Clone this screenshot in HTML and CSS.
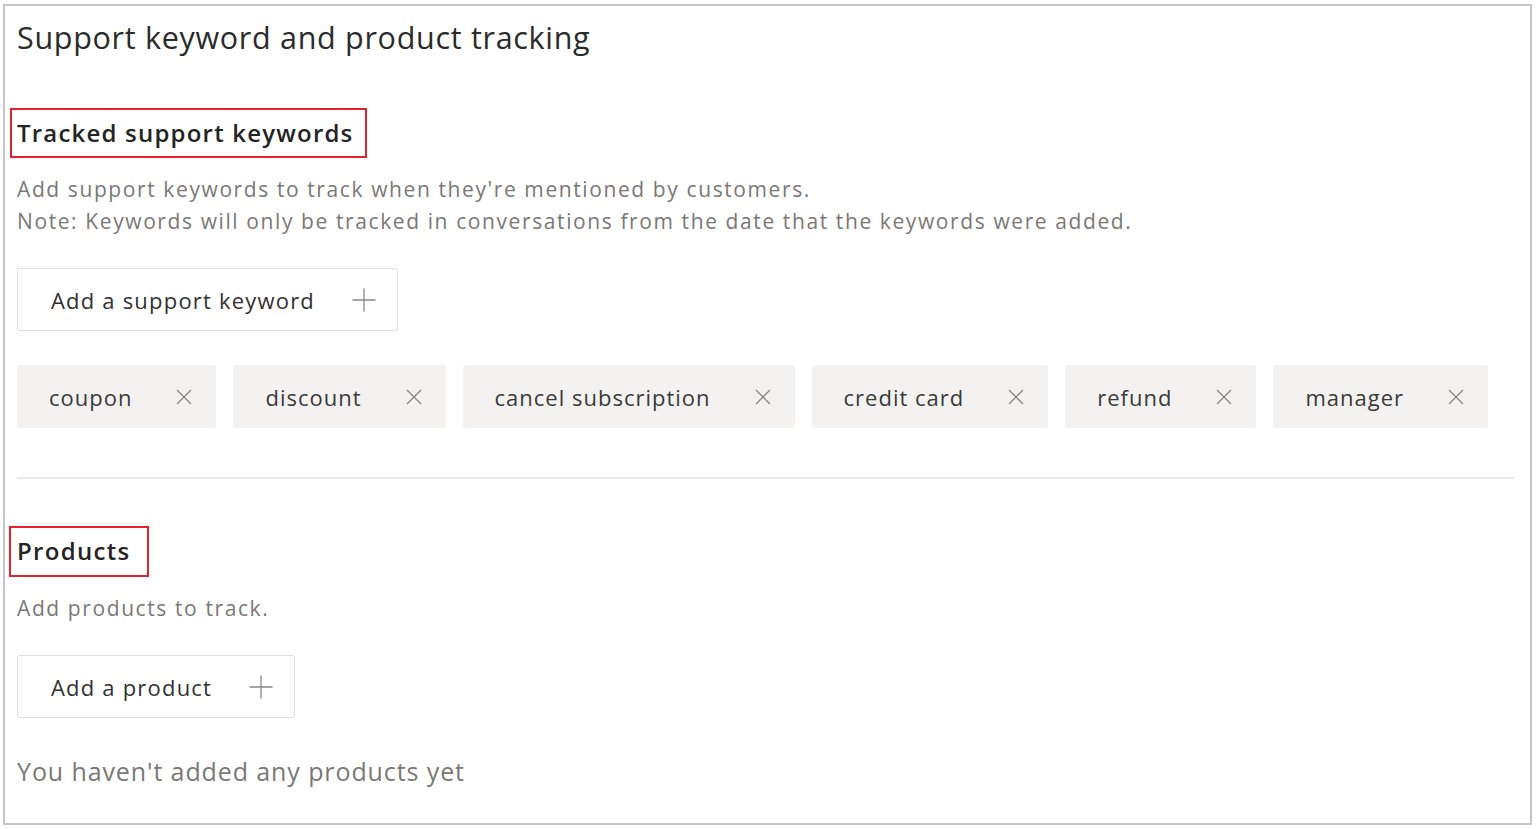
FILE: index.html
```html
<!DOCTYPE html>
<html>
<head>
<meta charset="utf-8">
<link rel="stylesheet" href="styles.css">
</head>
<body>
<div class="frame">
  <h1 class="title">Support keyword and product tracking</h1>

  <section class="section">
    <div class="annot annot-1"><h2 class="heading">Tracked support keywords</h2></div>
    <p class="desc">Add support keywords to track when they're mentioned by customers.<br>Note: Keywords will only be tracked in conversations from the date that the keywords were added.</p>
    <button class="add-btn add-kw"><span>Add a support keyword</span>
      <svg class="plus" viewBox="0 0 24 24" width="24" height="24"><path d="M12 0.5V23.5M0.5 12H23.5" stroke="#8a8886" stroke-width="1.3" fill="none"/></svg>
    </button>
    <div class="tags">
      <div class="tag"><span>coupon</span><svg class="x" viewBox="0 0 16 16" width="16" height="16"><path d="M1 1L15 15M15 1L1 15" stroke="#8a8886" stroke-width="1.4" fill="none"/></svg></div>
      <div class="tag"><span>discount</span><svg class="x" viewBox="0 0 16 16" width="16" height="16"><path d="M1 1L15 15M15 1L1 15" stroke="#8a8886" stroke-width="1.4" fill="none"/></svg></div>
      <div class="tag"><span>cancel subscription</span><svg class="x" viewBox="0 0 16 16" width="16" height="16"><path d="M1 1L15 15M15 1L1 15" stroke="#8a8886" stroke-width="1.4" fill="none"/></svg></div>
      <div class="tag"><span>credit card</span><svg class="x" viewBox="0 0 16 16" width="16" height="16"><path d="M1 1L15 15M15 1L1 15" stroke="#8a8886" stroke-width="1.4" fill="none"/></svg></div>
      <div class="tag"><span>refund</span><svg class="x" viewBox="0 0 16 16" width="16" height="16"><path d="M1 1L15 15M15 1L1 15" stroke="#8a8886" stroke-width="1.4" fill="none"/></svg></div>
      <div class="tag"><span>manager</span><svg class="x" viewBox="0 0 16 16" width="16" height="16"><path d="M1 1L15 15M15 1L1 15" stroke="#8a8886" stroke-width="1.4" fill="none"/></svg></div>
    </div>
  </section>

  <hr class="divider">

  <section class="section">
    <div class="annot annot-2"><h2 class="heading heading-products">Products</h2></div>
    <p class="desc desc-products">Add products to track.</p>
    <button class="add-btn add-prod"><span>Add a product</span>
      <svg class="plus" viewBox="0 0 24 24" width="24" height="24"><path d="M12 0.5V23.5M0.5 12H23.5" stroke="#8a8886" stroke-width="1.3" fill="none"/></svg>
    </button>
    <p class="empty">You haven't added any products yet</p>
  </section>
</div>
</body>
</html>
```

FILE: styles.css
```css
* { box-sizing: border-box; }
html, body { margin: 0; padding: 0; background: #ffffff; }
body {
  font-family: "Open Sans", "Noto Sans", "Liberation Sans", sans-serif;
  color: #323130;
}
.frame {
  margin: 4px 5px 0 3px;
  height: 821px;
  border: 2px solid #c6c6c6;
  padding: 0 16px 0 12px;
  overflow: hidden;
}
.title {
  margin: 0;
  padding-top: 11px;
  font-size: 30.5px;
  font-weight: 400;
  line-height: 40px;
  letter-spacing: 0.7px;
  color: #2b2b2b;
}
.annot {
  display: inline-block;
  border: 2px solid #e8202a;
  margin-left: -7px;
  height: 50px;
  padding-left: 5px;
}
.annot-1 { margin-top: 51px; padding-right: 12px; }
.annot-2 { margin-top: 47px; padding-right: 17px; height: 51px; margin-left: -8px; padding-left: 6px; }
.heading {
  margin: 0;
  font-size: 24px;
  font-weight: 600;
  line-height: 46px;
  letter-spacing: 1.2px;
  color: #252423;
}
.heading-products { letter-spacing: 1.3px; }
.desc {
  margin: 15px 0 0;
  font-size: 21px;
  line-height: 32px;
  letter-spacing: 1.6px;
  color: #7a7876;
}
.add-btn {
  display: flex;
  align-items: center;
  height: 63px;
  margin-top: 31px;
  padding: 0 21px 0 33px;
  background: #fff;
  border: 1px solid #e1dfdd;
  border-radius: 2px;
  font-family: inherit;
  font-size: 22px;
  letter-spacing: 1.2px;
  color: #323130;
  gap: 37px;
}
.add-btn span { line-height: 28px; }
.plus { display: block; }
.tags {
  display: flex;
  gap: 17px;
  margin-top: 34px;
}
.tag {
  display: flex;
  align-items: center;
  height: 63px;
  padding: 0 24px 0 32px;
  background: #f3f2f1;
  border-radius: 3px;
  font-size: 22px;
  letter-spacing: 1px;
  color: #3b3a39;
  gap: 44px;
}
.x { display: block; }
.divider {
  margin: 49px 0 0;
  border: none;
  height: 2px;
  background: #e9e8e7;
}
.desc-products { margin-top: 15px; }
.add-prod { margin-top: 31px; }
.empty {
  margin: 37px 0 0;
  font-size: 25px;
  line-height: 32px;
  letter-spacing: 0.9px;
  color: #7a7876;
}
```
